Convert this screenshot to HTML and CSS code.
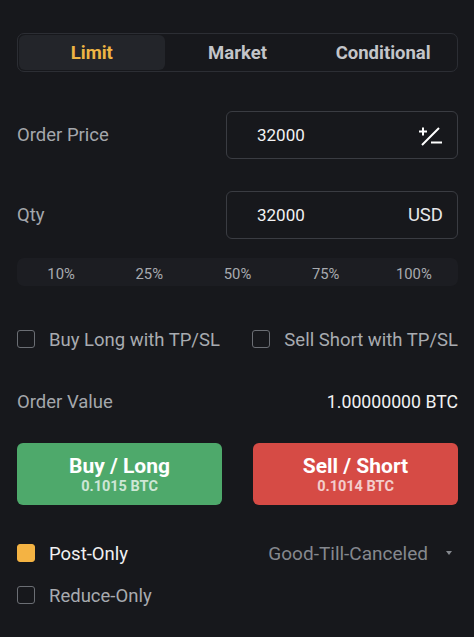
FILE: index.html
```html
<!DOCTYPE html>
<html lang="en">
<head>
<meta charset="utf-8">
<title>Order Form</title>
<link rel="stylesheet" href="styles.css">
</head>
<body>
<div class="panel">
  <div class="tabs">
    <div class="tab active">Limit</div>
    <div class="tab">Market</div>
    <div class="tab">Conditional</div>
  </div>

  <div class="field-row first">
    <div class="label">Order Price</div>
    <div class="input">
      <span class="value">32000</span>
      <svg class="pm" width="26" height="20" viewBox="0 0 26 20" aria-hidden="true">
        <path d="M2 5.5H10M6 1.5V9.5M5 19L22 2M14 16.5H25" stroke="#ffffff" stroke-width="2" fill="none" stroke-linecap="butt"/>
      </svg>
    </div>
  </div>

  <div class="field-row second">
    <div class="label">Qty</div>
    <div class="input">
      <span class="value">32000</span>
      <span class="unit">USD</span>
    </div>
  </div>

  <div class="pcts">
    <span>10%</span><span>25%</span><span>50%</span><span>75%</span><span>100%</span>
  </div>

  <div class="tpsl">
    <label class="check"><span class="box"></span>Buy Long with TP/SL</label>
    <label class="check"><span class="box"></span>Sell Short with TP/SL</label>
  </div>

  <div class="order-value">
    <span class="label">Order Value</span>
    <span class="ov">1.00000000 BTC</span>
  </div>

  <div class="actions">
    <button class="btn buy"><span class="main">Buy / Long</span><span class="sub">0.1015 BTC</span></button>
    <button class="btn sell"><span class="main">Sell / Short</span><span class="sub">0.1014 BTC</span></button>
  </div>

  <div class="opt-row">
    <label class="check on"><span class="box filled"></span>Post-Only</label>
    <div class="tif">Good-Till-Canceled <span class="caret"></span></div>
  </div>
  <div class="opt-row last">
    <label class="check"><span class="box"></span>Reduce-Only</label>
  </div>
</div>
</body>
</html>
```

FILE: styles.css
```css
* { box-sizing: border-box; }
html, body {
  margin: 0;
  padding: 0;
  background: #17181c;
}
body {
  font-family: Roboto, "Noto Sans", sans-serif;
  color: #a4a7ac;
  width: 474px;
  height: 637px;
  overflow: hidden;
}
.panel {
  padding: 33px 16px 0 17px;
}
.tabs {
  display: grid;
  grid-template-columns: 1fr 1fr 1fr;
  height: 39px;
  border: 1px solid #2c2e34;
  border-radius: 7px;
  padding: 1px;
}
.tab {
  display: flex;
  align-items: center;
  justify-content: center;
  font-weight: 700;
  font-size: 18.5px;
  color: #c3c5c9;
  border-radius: 6px;
}
.tab.active {
  background: #23252a;
  color: #eeb544;
}
.field-row {
  display: flex;
  align-items: center;
  justify-content: space-between;
}
.field-row.first { margin-top: 39px; }
.field-row.second { margin-top: 32px; }
.label {
  font-size: 18.5px;
  color: #a4a7ac;
}
.input {
  width: 232px;
  height: 48px;
  border: 1px solid #3a3c42;
  border-radius: 6px;
  display: flex;
  align-items: center;
  justify-content: space-between;
  padding: 0 14px 0 30px;
}
.value {
  color: #f2f2f3;
  font-size: 17px;
}
.unit {
  color: #e6e7e9;
  font-size: 18.5px;
}
.pm { margin-top: 1px; }
.pcts {
  margin-top: 19px;
  height: 28px;
  padding-top: 3px;
  background: #1c1d22;
  border-radius: 7px;
  display: grid;
  grid-template-columns: repeat(5, 1fr);
  align-items: center;
  font-size: 14.8px;
  color: #a8abb0;
}
.pcts span { text-align: center; }
.tpsl {
  margin-top: 44px;
  display: flex;
  justify-content: space-between;
  height: 18px;
}
.check {
  display: flex;
  align-items: center;
  gap: 14px;
  font-size: 18.5px;
  color: #a8abb0;
  line-height: 18px;
}
.check .box { margin-top: -2px; }
.box {
  width: 18px;
  height: 18px;
  border: 1.5px solid #6b6e74;
  border-radius: 3px;
  flex: none;
}
.box.filled {
  background: #f4b343;
  border-color: #f4b343;
}
.check.on { color: #f0f0f1; }
.tpsl .check, .opt-row .check { padding-top: 2px; }
.order-value {
  margin-top: 42px;
  display: flex;
  justify-content: space-between;
  align-items: center;
  height: 24px;
}
.ov {
  color: #f2f2f3;
  font-size: 17.7px;
}
.actions {
  margin-top: 29px;
  display: flex;
  justify-content: space-between;
}
.btn {
  width: 205px;
  height: 62px;
  border: none;
  border-radius: 6px;
  display: flex;
  flex-direction: column;
  align-items: center;
  justify-content: center;
  font-family: inherit;
  color: #ffffff;
  padding: 2px 0 0;
}
.btn.buy { background: #4ea96b; }
.btn.sell { background: #d64b45; }
.btn .main {
  font-size: 21px;
  font-weight: 700;
  line-height: 23px;
}
.btn .sub {
  font-size: 14.5px;
  font-weight: 700;
  line-height: 17px;
  opacity: 0.72;
}
.opt-row {
  margin-top: 39px;
  display: flex;
  justify-content: space-between;
  align-items: center;
  height: 18px;
}
.opt-row.last { margin-top: 24px; }
.tif {
  display: flex;
  align-items: center;
  font-size: 19px;
  color: #85888e;
  padding-right: 6px;
}
.caret {
  margin-left: 18px;
  width: 0;
  height: 0;
  border-left: 3px solid transparent;
  border-right: 3px solid transparent;
  border-top: 4px solid #85888e;
}
```
